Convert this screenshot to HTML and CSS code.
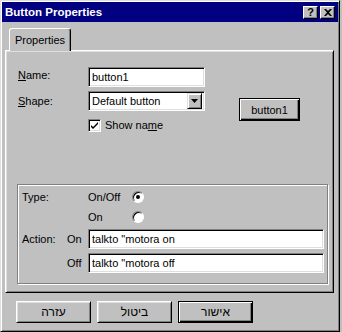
FILE: index.html
```html
<!DOCTYPE html>
<html lang="en">
<head>
  <meta charset="UTF-8" />
  <title>Button Properties</title>
  <link rel="stylesheet" href="styles.css">
</head>
<body>

  <div class="window">
    <div class="titlebar">
      <span class="title">Button Properties</span>
      <div class="caption-btns">
        <span class="cap-btn help">?</span>
        <span class="cap-btn">
          <svg width="8" height="7" viewBox="0 0 8 7"><path d="M0 0h2l2 2 2-2h2L5 3.5 8 7H6L4 5 2 7H0l3-3.5z" fill="#000"/></svg>
        </span>
      </div>
    </div>

    <div class="content">
      <div class="tab">Properties</div>

      <div class="panel">
        <div class="form">
          <label class="lbl name-lbl"><u>N</u>ame:</label>
          <div class="field">button1</div>
          <div class="btn default preview">button1</div>

          <label class="lbl"><u>S</u>hape:</label>
          <div class="field select">
            <span>Default button</span>
            <span class="drop">
              <svg width="7" height="4" viewBox="0 0 7 4"><path d="M0 0h7L3.5 4z" fill="#000"/></svg>
            </span>
          </div>

          <div class="check-row">
            <span class="checkbox">
              <svg width="9" height="9" viewBox="0 0 9 9"><path d="M1 4l2 2 5-5v2L3 8 1 6z" fill="#000"/></svg>
            </span>
            <span>Show na<u>m</u>e</span>
          </div>
        </div>

        <div class="group">
          <div class="cell span2">Type:</div>
          <div class="cell"><span class="opt">On/Off</span><span class="radio checked"></span></div>

          <div class="cell col3"><span class="opt">On</span><span class="radio"></span></div>

          <div class="cell">Action:</div>
          <div class="cell">On</div>
          <div class="field">talkto "motora on</div>

          <div class="cell col2">Off</div>
          <div class="field">talkto "motora off</div>
        </div>
      </div>

      <div class="buttons">
        <div class="btn heb">עזרה</div>
        <div class="btn heb">ביטול</div>
        <div class="btn heb default">אישור</div>
      </div>
    </div>
  </div>

</body>
</html>
```

FILE: styles.css
```css
* {
  margin: 0;
  padding: 0;
  box-sizing: border-box;
}

body {
  background: #c0c0c0;
  color: #000;
  font-family: "Liberation Sans", Arial, sans-serif;
  font-size: 11px;
}

.window {
  width: 340px;
  height: 332px;
  padding: 1px;
  border: 1px solid;
  border-color: #dfdfdf #000 #000 #dfdfdf;
  box-shadow: inset 1px 1px #fff, inset -1px -1px #808080;
}

.titlebar {
  height: 20px;
  background: #000080;
  display: flex;
  justify-content: space-between;
  align-items: center;
  padding: 0 3px 0 3px;
}

.title {
  color: white;
  font-weight: bold;
  font-size: 11.5px;
}

.caption-btns {
  display: flex;
  gap: 2px;
}

.cap-btn {
  width: 15px;
  height: 13px;
  background: #c0c0c0;
  border: 1px solid;
  border-color: #fff #000 #000 #fff;
  box-shadow: inset -1px -1px #808080;
  display: flex;
  justify-content: center;
  align-items: center;
}

.cap-btn.help {
  font-weight: bold;
  font-size: 11px;
  line-height: 1;
}

.content {
  padding: 6px 4px 0 3px;
}

.tab {
  position: relative;
  z-index: 1;
  width: 62px;
  height: 23px;
  margin-left: 4px;
  margin-bottom: -1px;
  background: #c0c0c0;
  border: 1px solid;
  border-bottom: none;
  border-color: #fff #000 #000 #fff;
  border-radius: 3px 3px 0 0;
  box-shadow: inset -1px 0 #808080;
  display: flex;
  justify-content: center;
  align-items: center;
  padding-bottom: 1px;
}

.panel {
  height: 243px;
  border: 1px solid;
  border-color: #fff #000 #000 #fff;
  box-shadow: inset 1px 1px #dfdfdf, inset -1px -1px #808080;
  padding: 16px 5px 8px 12px;
  display: flex;
  flex-direction: column;
}

.form {
  display: grid;
  grid-template-columns: 70px 117px 95px;
  grid-template-rows: 20px 20px 13px;
  row-gap: 4px;
}

.lbl {
  align-self: center;
}

.name-lbl {
  padding-bottom: 4px;
}

.field {
  height: 20px;
  background: #fff;
  border: 1px solid;
  border-color: #808080 #fff #fff #808080;
  box-shadow: inset 1px 1px #000, inset -1px -1px #dfdfdf;
  padding: 0 3px;
  display: flex;
  align-items: center;
  white-space: nowrap;
  overflow: hidden;
}

.select {
  justify-content: space-between;
  padding-right: 2px;
}

.drop {
  width: 15px;
  height: 16px;
  background: #c0c0c0;
  border: 1px solid;
  border-color: #dfdfdf #000 #000 #dfdfdf;
  box-shadow: inset 1px 1px #fff, inset -1px -1px #808080;
  display: flex;
  justify-content: center;
  align-items: center;
}

.check-row {
  grid-column: 2;
  grid-row: 3;
  margin-top: 7px;
  display: flex;
  align-items: center;
  gap: 4px;
}

.checkbox {
  width: 13px;
  height: 13px;
  background: #fff;
  border: 1px solid;
  border-color: #808080 #fff #fff #808080;
  box-shadow: inset 1px 1px #000, inset -1px -1px #dfdfdf;
  display: flex;
  justify-content: center;
  align-items: center;
}

.btn {
  height: 22px;
  background: #c0c0c0;
  border: 1px solid;
  border-color: #fff #000 #000 #fff;
  box-shadow: inset 1px 1px #dfdfdf, inset -1px -1px #808080;
  display: flex;
  justify-content: center;
  align-items: center;
}

.btn.default {
  border-color: #000;
  box-shadow: inset 1px 1px #fff, inset -1px -1px #000, inset -2px -2px #808080;
}

.preview {
  grid-column: 3;
  grid-row: 1 / span 3;
  justify-self: end;
  align-self: start;
  width: 61px;
  height: 23px;
  margin-top: 31px;
}

.group {
  margin-top: auto;
  margin-left: -1px;
  border: 1px solid #808080;
  box-shadow: inset 1px 1px #fff, 1px 1px #fff;
  padding: 2px 3px 10px 4px;
  display: grid;
  grid-template-columns: 45px 21px 1fr;
  grid-template-rows: 20px 22px 24px 20px;
  align-items: start;
}

.cell {
  height: 20px;
  display: flex;
  align-items: center;
}

.span2 {
  grid-column: 1 / span 2;
}

.col2 {
  grid-column: 2;
}

.col3 {
  grid-column: 3;
}

.opt {
  width: 44px;
}

.radio {
  width: 12px;
  height: 12px;
  border-radius: 50%;
  background: #fff;
  border: 1px solid;
  border-color: #808080 #fff #fff #808080;
  box-shadow: inset 1px 1px #000;
  display: flex;
  justify-content: center;
  align-items: center;
}

.radio.checked::after {
  content: "";
  width: 4px;
  height: 4px;
  border-radius: 50%;
  background: #000;
}

.buttons {
  display: flex;
  gap: 6px;
  margin: 8px 0 0 11px;
}

.buttons .btn {
  width: 75px;
}

.heb {
  font-family: "Liberation Sans", "DejaVu Sans", sans-serif;
  font-size: 12px;
}
```
